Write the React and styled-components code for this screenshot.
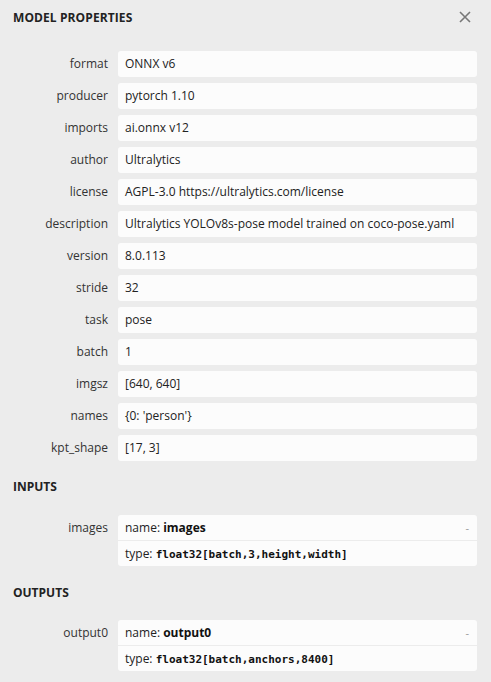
import React from 'react';
import styled, { createGlobalStyle } from 'styled-components';

const GlobalStyle = createGlobalStyle`
  html, body {
    margin: 0;
    padding: 0;
    background: #ececec;
  }
  body {
    font-family: "Open Sans", "Noto Sans", sans-serif;
    color: #333;
  }
`;

const Sidebar = styled.div`
  width: 491px;
  min-height: 682px;
  background: #ececec;
  padding: 0 14px 0 0;
  box-sizing: border-box;
`;

const Header = styled.div`
  display: flex;
  align-items: center;
  justify-content: space-between;
  height: 34px;
  padding-left: 13px;
`;

const Title = styled.div`
  font-size: 12px;
  font-weight: 700;
  color: #222;
  letter-spacing: 0.1px;
`;

const CloseButton = styled.button`
  background: none;
  border: none;
  padding: 0;
  margin-right: 4px;
  width: 16px;
  height: 16px;
  cursor: pointer;
  display: flex;
  align-items: center;
  justify-content: center;
`;

const SectionTitle = styled.div`
  height: 34px;
  line-height: 34px;
  padding-left: 13px;
  margin-top: ${p => p.$top}px;
  font-size: 12px;
  font-weight: 700;
  color: #222;
`;

const List = styled.div`
  display: flex;
  flex-direction: column;
  gap: 6px;
  margin-top: ${p => p.$top}px;
`;

const Row = styled.div`
  display: grid;
  grid-template-columns: 108px 1fr;
  column-gap: 10px;
  align-items: start;
`;

const Label = styled.div`
  text-align: right;
  font-size: 12px;
  line-height: 26px;
  color: #333;
  white-space: nowrap;
`;

const Value = styled.div`
  background: #fcfcfc;
  border-radius: 3px;
  height: 26px;
  line-height: 26px;
  padding: 0 7px;
  font-size: 12px;
  color: #222;
  white-space: nowrap;
  overflow: hidden;
`;

const Box = styled.div`
  background: #fcfcfc;
  border-radius: 3px;
`;

const Line = styled.div`
  position: relative;
  height: 25px;
  line-height: 25px;
  padding: 0 7px;
  font-size: 12px;
  color: #222;
  & + & {
    border-top: 1px solid #ececec;
  }
`;

const Toggle = styled.span`
  position: absolute;
  right: 8px;
  top: 0;
  color: #999;
  font-size: 11px;
`;

const Bold = styled.b`
  font-weight: 700;
  color: #111;
`;

const Code = styled.code`
  font-family: "DejaVu Sans Mono", "Liberation Mono", monospace;
  font-size: 11px;
  font-weight: 700;
  color: #111;
`;

const props = [
  ['format', 'ONNX v6'],
  ['producer', 'pytorch 1.10'],
  ['imports', 'ai.onnx v12'],
  ['author', 'Ultralytics'],
  ['license', 'AGPL-3.0 https://ultralytics.com/license'],
  ['description', 'Ultralytics YOLOv8s-pose model trained on coco-pose.yaml'],
  ['version', '8.0.113'],
  ['stride', '32'],
  ['task', 'pose'],
  ['batch', '1'],
  ['imgsz', '[640, 640]'],
  ['names', "{0: 'person'}"],
  ['kpt_shape', '[17, 3]'],
];

const Argument = ({ label, name, type }) => (
  <Row>
    <Label>{label}</Label>
    <Box>
      <Line>
        name: <Bold>{name}</Bold>
        <Toggle>-</Toggle>
      </Line>
      <Line>
        type: <Code>{type}</Code>
      </Line>
    </Box>
  </Row>
);

export default function App() {
  return (
    <>
      <GlobalStyle />
      <Sidebar>
        <Header>
          <Title>MODEL PROPERTIES</Title>
          <CloseButton aria-label="close">
            <svg width="12" height="12" viewBox="0 0 12 12">
              <path d="M1 1 L11 11 M11 1 L1 11" stroke="#777" strokeWidth="1.6" />
            </svg>
          </CloseButton>
        </Header>
        <List $top={17}>
          {props.map(([k, v]) => (
            <Row key={k}>
              <Label>{k}</Label>
              <Value>{v}</Value>
            </Row>
          ))}
        </List>
        <SectionTitle $top={9}>INPUTS</SectionTitle>
        <List $top={11}>
          <Argument label="images" name="images" type="float32[batch,3,height,width]" />
        </List>
        <SectionTitle $top={10}>OUTPUTS</SectionTitle>
        <List $top={10}>
          <Argument label="output0" name="output0" type="float32[batch,anchors,8400]" />
        </List>
      </Sidebar>
    </>
  );
}
